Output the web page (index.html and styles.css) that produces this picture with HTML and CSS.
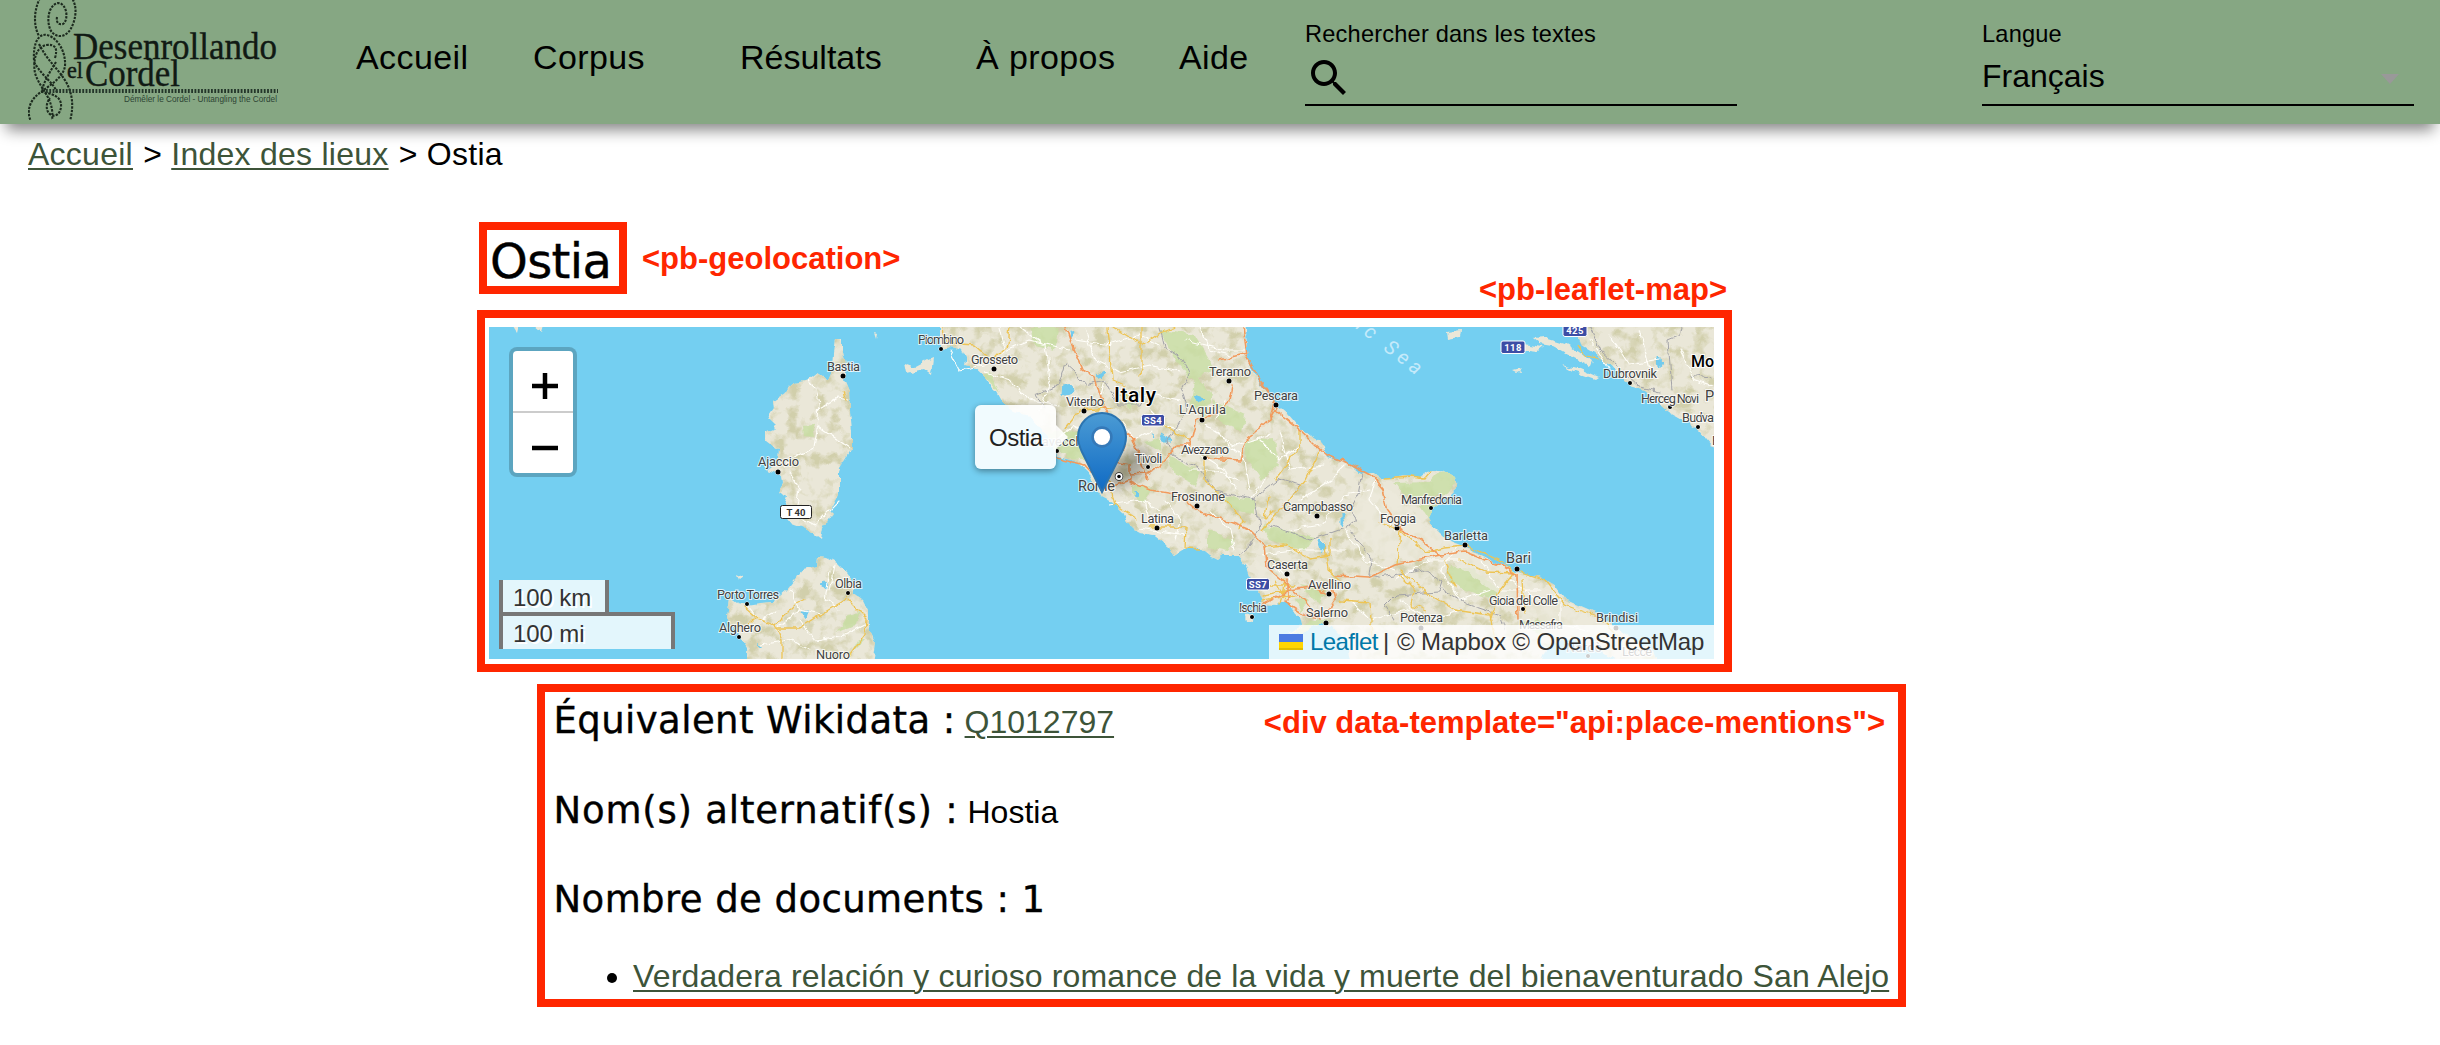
FILE: index.html
```html
<!DOCTYPE html>
<html lang="fr">
<head>
<meta charset="utf-8">
<title>Ostia – Desenrollando el Cordel</title>
<link rel="stylesheet" href="styles.css">
</head>
<body>
<header class="topbar">
  <svg class="logo" viewBox="28 0 250 120" width="250" height="120">
    <g class="cord">
      <path d="M57 17C56 23 59 25 63 24C69 20 67 3 58 3C48 5 46 22 51 31C57 39 68 38 73 24C77 13 76 5 72 -2"/>
      <path d="M40 -2C33 12 34 27 39 36"/>
      <path d="M34 60C33 44 38 33 47 35C58 38 66 52 65 66C63 80 44 88 35 97C27 106 28 116 31 121"/>
      <path d="M55 58C58 48 55 44 46 45C35 48 33 62 35 73C40 90 55 98 52 121"/>
      <path d="M39 44C48 62 58 68 66 82C74 96 73 110 70 121"/>
      <path d="M56 62C50 72 43 82 42 92C52 94 62 96 61 107C60 114 56 117 51 115C45 111 46 103 50 98"/>
      <path d="M34 62C42 76 55 84 57 93"/>
    </g>
    <path class="cord-line" d="M46 91H278"/>
    <text class="brand" x="73" y="59" font-size="37" textLength="204" lengthAdjust="spacingAndGlyphs">Desenrollando</text>
    <text class="brand" x="67" y="78" font-size="24" textLength="16" lengthAdjust="spacingAndGlyphs">el</text>
    <text class="brand" x="85" y="86" font-size="37" textLength="95" lengthAdjust="spacingAndGlyphs">Cordel</text>
    <text class="brand-sub" x="124" y="101.500" textLength="153" lengthAdjust="spacingAndGlyphs">Démêler le Cordel - Untangling the Cordel</text>
  </svg>
  <nav class="menu"><a>Accueil</a><a>Corpus</a><a>Résultats</a><a>À propos</a><a>Aide</a></nav>
  <div class="field">
    <span class="field-label">Rechercher dans les textes</span>
    <div class="field-value"><svg class="search" viewBox="3 3 17.500 17.500" width="35" height="35"><path d="M15.500 14h-.79l-.28-.27C15.410 12.590 16 11.110 16 9.500 16 5.910 13.090 3 9.500 3S3 5.910 3 9.500 5.910 16 9.500 16c1.610 0 3.090-.59 4.230-1.570l.27.28v.79l5 4.990L20.490 19l-4.990-5zm-6 0C7.010 14 5 11.990 5 9.500S7.010 5 9.500 5 14 7.010 14 9.500 11.990 14 9.500 14z"/></svg></div>
  </div>
  <div class="field lang">
    <span class="field-label">Langue</span>
    <div class="field-value"><span>Français</span><i class="caret"></i></div>
  </div>
</header>
<div class="crumbs"><a>Accueil</a> &gt; <a>Index des lieux</a> &gt; Ostia</div>
<main>
  <div class="title-row">
    <h1>Ostia</h1>
    <span class="note">&lt;pb-geolocation&gt;</span>
    <span class="note note-map">&lt;pb-leaflet-map&gt;</span>
  </div>
  <section class="map-frame">
    <div class="map">
      <svg class="tiles" viewBox="489 327 1225 332" width="1225" height="332">
        <defs>
          <filter id="rough" filterUnits="userSpaceOnUse" x="480" y="318" width="1244" height="350">
            <feTurbulence type="fractalNoise" baseFrequency=".11" numOctaves="2" seed="4"/>
            <feDisplacementMap in="SourceGraphic" scale="7" xChannelSelector="R" yChannelSelector="G"/>
          </filter>
          <filter id="relief" filterUnits="userSpaceOnUse" x="480" y="318" width="1244" height="350" color-interpolation-filters="sRGB">
            <feTurbulence type="fractalNoise" baseFrequency=".075" numOctaves="3" seed="11"/>
            <feColorMatrix values="0 0 0 0 .82  0 0 0 0 .81  0 0 0 0 .67  3.500 0 0 0 -1.600"/>
          </filter>
          <clipPath id="landclip"><use href="#mainland"/><use href="#corsica"/><use href="#sardinia"/><use href="#balkans"/></clipPath>
        </defs>
        <rect x="489" y="327" width="1225" height="332" fill="#74cff1"/>
        <g filter="url(#rough)">
          <g fill="#eae7d8">
            <path id="mainland" d="M940 310L940 350 950 347 962 350 966 358 964 365 975 368 983 375 990 385 997 392 1003 403 1015 412 1030 417 1040 428 1055 443 1057 457 1073 460 1087 470 1093 483 1102 497 1113 503 1123 513 1130 528 1140 533 1155 535 1167 545 1173 555 1183 549 1200 547 1210 555 1218 559 1223 555 1237 555 1247 567 1252 582 1258 590 1263 604 1277 605 1287 602 1295 613 1300 617 1302 625 1288 633 1300 634 1320 623 1333 627 1347 643 1352 675 1535 675 1548 645 1570 640 1600 650 1640 675 1660 675 1653 650 1630 637 1613 625 1595 612 1567 600 1557 587 1540 577 1517 572 1497 563 1480 555 1463 545 1442 537 1432 527 1429 517 1433 508 1447 497 1457 487 1455 477 1440 469 1427 472 1420 477 1403 475 1390 478 1380 478 1372 473 1360 473 1348 463 1327 457 1322 442 1310 435 1300 428 1288 414 1275 403 1262 385 1252 370 1247 350 1245 310Z"/>
            <path id="corsica" d="M835 339L843 339 843 352 846 365 844 380 849 392 850 410 852 430 852 448 843 462 839 473 839 493 830 510 833 513 823 527 821 539 813 533 803 527 792 523 783 512 788 498 777 493 783 483 782 475 767 470 777 462 778 450 765 440 765 433 777 428 767 418 774 408 773 400 785 392 795 383 808 380 817 373 828 380 832 370 833 353Z"/>
            <path id="sardinia" d="M748 675L747 647 739 635 727 617 730 598 737 603 747 605 760 603 773 602 787 590 795 580 803 570 817 567 818 557 827 558 837 563 847 573 852 580 853 593 863 600 868 610 868 627 876 642 872 675Z"/>
            <path id="balkans" d="M1565 310L1562 325 1578 334 1582 346 1592 352 1602 360 1610 365 1620 377 1633 387 1643 390 1657 402 1668 412 1677 417 1687 423 1700 432 1711 445 1725 450 1725 310Z"/>
            <path d="M1533 338L1545 337 1565 343 1580 352 1592 361 1590 366 1572 357 1552 346 1540 344ZM1523 344L1543 347 1538 351 1522 349ZM1562 364L1580 369 1598 377 1595 379 1575 372ZM1447 332L1460 330 1459 337 1448 339ZM512 325L519 325 517 333ZM533 325L543 325 541 332ZM904 363L915 367 928 360 933 358 931 374 924 369 906 373ZM1514 370L1522 368 1520 373ZM1245 616L1254 615 1253 621 1246 620ZM736 573L742 576 738 579ZM875 333L878 334 877 339Z"/>
          </g>
          <g clip-path="url(#landclip)">
            <rect x="489" y="327" width="1225" height="332" filter="url(#relief)"/>
            <g fill="#c8dfa4" opacity=".8">
              <path d="M1030 327L1060 327 1055 350 1035 345ZM1160 330L1195 335 1215 370 1190 380 1170 350ZM1195 375L1212 395 1205 420 1190 405ZM1212 400L1245 415 1242 432 1220 422ZM1245 440L1275 438 1278 465 1262 480 1245 455ZM1168 455L1200 472 1195 485 1175 475ZM1132 485L1152 488 1145 503 1132 495ZM1220 495L1255 500 1255 515 1230 508ZM1208 530L1235 540 1228 552 1208 548ZM1262 525L1315 537 1305 552 1270 540ZM1392 483L1430 482 1440 470 1458 477 1445 495 1410 497ZM1450 565L1475 570 1500 590 1495 600 1465 590 1448 580ZM1295 598L1310 600 1302 612ZM1300 585L1325 590 1320 605ZM1290 634L1310 620 1330 620 1300 640ZM1420 505L1440 505 1430 520ZM1040 435L1080 430 1095 460 1070 458ZM1120 395L1140 392 1130 410ZM1145 442L1160 438 1160 452ZM983 375L990 372 1000 393ZM803 426L812 425 814 437 804 436ZM848 615L860 612 855 625 838 632ZM1520 622L1545 620 1540 635ZM865 640L850 655 858 640Z"/>
            </g>
            <g fill="#ece9dc" opacity=".75">
              <path d="M1370 480L1390 490 1430 530 1520 575 1620 630 1600 650 1520 610 1450 560 1380 560 1350 520ZM1130 505L1190 535 1185 548 1140 530ZM1255 560L1295 590 1265 602Z"/>
            </g>
          </g>
          <g class="lake">
            <path d="M1063 385Q1074 380 1074 392 1070 398 1062 394ZM1097 375L1105 371 1100 377ZM1195 395L1204 398 1198 402ZM1160 434L1172 441 1164 441ZM1134 490L1139 495 1135 497ZM1342 513L1345 520 1342 526ZM1318 540L1326 548 1322 552ZM821 585L829 582 827 588ZM802 612L808 611 806 618ZM757 645L763 647ZM1657 357L1664 363 1658 367ZM1070 330L1074 333 1071 338ZM1150 432L1155 438Z"/>
          </g>
          <g class="road border">
            <path d="M1160 327L1165 348 1180 357 1190 375 1182 390 1188 410 1168 440 1172 455 1200 470 1215 490 1255 500 1260 530 1250 545 1238 555M1065 363L1058 385 1036 395 1045 408M1065 363L1075 372 1085 385 1105 380 1118 405 1140 405 1148 390M1252 500L1280 478 1300 485 1292 495M1362 473L1358 495 1350 510 1357 520 1345 528 1310 540 1270 525M1350 530L1372 560 1370 575 1380 577 1425 570 1443 583 1440 592 1395 595 1385 605 1395 620M1443 590L1470 605 1500 615 1505 630M1590 327L1600 350 1640 387 1660 392M1672 390L1668 340 1680 335 1682 327M1690 375L1710 378"/>
          </g>
          <g class="road white">
            <path d="M808 380L816 388 819 405 817 430 814 448 798 455 783 465M817 410L838 398 848 400M817 425L850 448M790 472L800 490 795 515 815 525 840 500M748 605L760 620 775 612M790 590L800 610 820 615M830 570L825 600 840 610M760 645L790 640 810 650M800 620L815 640 845 635 865 625M835 565L830 590M775 630L800 610"/>
            <path d="M950 350L960 370 985 365 1005 350 1030 340 1070 350M985 372L1010 380 1030 400 1060 405M1000 327L1005 350M1020 327L1045 345 1050 380 1040 410M1075 340L1110 345 1140 335 1160 345M1085 330L1095 360 1120 372 1150 365 1180 372M1100 400L1105 380M1130 400L1155 395 1180 400M1185 340L1225 350 1245 350M1200 327L1210 350 1230 355M1150 410L1165 425 1180 430M1120 420L1135 440 1150 430M1205 425L1235 445 1270 435M1215 430L1245 460 1250 490M1225 400L1215 420M1260 440L1280 460 1300 445M1280 430L1290 470 1325 465M1050 445L1075 425 1085 430M1110 505L1140 500 1160 510M1145 500L1150 525M1165 500L1180 520 1175 540M1190 470L1215 470 1240 480M1210 510L1230 530 1235 550M1250 500L1265 480M1300 500L1330 480 1345 465M1290 530L1320 525 1345 495 1370 490M1375 480L1370 500 1395 530M1262 555L1300 550 1345 550M1345 530L1365 560 1395 570M1395 580L1430 560 1465 560M1460 545L1440 570 1460 600 1490 590M1480 560L1500 590 1540 590M1510 580L1540 600 1560 595M1560 600L1560 625 1590 630M1400 600L1430 620 1460 610M1350 600L1370 620 1410 610M1275 565L1290 580M1140 528L1185 535M1590 340L1610 370M1610 335L1630 365 1660 360M1640 330L1650 370M1680 350L1695 380 1712 385M1185 445L1225 470 1235 490"/>
          </g>
          <g class="road yellow">
            <path d="M943 327L945 343 975 345 993 360 1008 345 1010 327M1108 327L1112 380 1125 385 1127 400M1113 327L1142 345 1160 333 1175 327M1142 327L1142 370 1138 375M1160 422L1180 435 1190 440M1066 428L1080 410 1112 408M1107 472L1115 505 1138 520M1150 527L1186 527 1185 548 1200 549M1205 460L1205 480 1225 500 1243 520 1240 530M1268 495L1265 520 1275 510M1275 480L1300 445 1300 430M1320 450L1305 480 1280 510 1262 530M1265 547L1285 545 1310 558 1330 555 1330 540M1325 545L1328 570 1340 580M1385 478L1410 476 1425 478 1430 472M1378 522L1400 530 1397 565M1400 530L1425 552 1445 547 1465 545 1500 560 1517 575M1445 560L1455 588 1450 580M1460 560L1485 572 1515 573M1400 575L1415 590 1412 605 1425 610M1340 600L1370 602 1372 640M1400 570L1430 595 1455 610 1490 615 1495 640M1515 572L1500 590 1490 620M1520 572L1545 580 1565 605 1600 618 1622 640M1523 580L1525 612M1260 585L1295 585M1262 595L1290 590M1262 600L1295 595M1275 580L1285 600M1285 580L1280 605M745 607L758 618 775 625 782 640 782 659M775 628L800 628 825 612 845 600 848 595M775 625L795 605 805 600M848 600L866 618 865 635 850 655M1578 345L1585 355 1600 360M843 391L846 401M755 618L748 625"/>
          </g>
          <g class="road orange">
            <path d="M1066 327L1072 345 1082 370 1095 378 1103 405 1115 425 1135 440M1055 458L1085 465 1098 480 1112 487 1130 480 1130 465 1115 462 1108 470M1130 474L1148 473 1160 465 1178 445 1190 445 1196 420 1215 414 1230 400 1233 385M1205 458L1240 460 1245 440 1270 420 1278 405M1118 460L1125 445 1120 420M1243 327L1247 355 1260 380 1276 403M1220 360L1247 353M1275 400L1270 418M1275 410L1300 430 1327 455 1348 463 1370 475 1383 490 1388 510 1402 530 1420 540 1440 555 1465 552 1500 565 1517 575 1518 620M1133 440L1140 460 1148 480M1130 482L1150 490 1180 495 1200 512 1220 518 1250 530 1265 545 1267 567 1287 585 1305 600 1320 620M1263 604L1290 590 1310 587 1325 592M1287 580L1287 600M1335 575L1370 577 1395 565 1440 555M1285 602L1305 615 1320 618M1330 580L1335 600 1325 615"/>
          </g>
        </g>
        <ellipse class="pin-shadow" cx="1128" cy="468" rx="27" ry="14" transform="rotate(-40 1128 468)"/>
        <g class="dots">
          <circle cx="843" cy="376" r="2.500"/><circle cx="778" cy="472" r="2.500"/><circle cx="747" cy="604" r="2"/><circle cx="848" cy="593" r="2"/><circle cx="739" cy="637" r="2"/><circle cx="941" cy="349" r="2"/><circle cx="994" cy="369" r="2.500"/><circle cx="1084" cy="411" r="2.500"/><circle cx="1057" cy="451" r="2"/><circle cx="1229" cy="381" r="2.500"/><circle cx="1276" cy="405" r="2.500"/><circle cx="1202" cy="420" r="2.500"/><circle cx="1205" cy="458" r="2"/><circle cx="1148" cy="467" r="2"/><circle cx="1197" cy="506" r="2.500"/><circle cx="1157" cy="528" r="2.500"/><circle cx="1287" cy="574" r="2.500"/><circle cx="1252" cy="617" r="2"/><circle cx="1317" cy="516" r="2.500"/><circle cx="1329" cy="594" r="2.500"/><circle cx="1326" cy="623" r="2.500"/><circle cx="1397" cy="528" r="2.500"/><circle cx="1431" cy="508" r="2"/><circle cx="1465" cy="545" r="2.500"/><circle cx="1517" cy="569" r="2.500"/><circle cx="1523" cy="609" r="2"/><circle cx="1421" cy="628" r="2.500"/><circle cx="1616" cy="628" r="2.500"/><circle cx="1630" cy="383" r="2"/><circle cx="1670" cy="407" r="2"/><circle cx="1698" cy="427" r="2"/><circle cx="1588" cy="656" r="2"/>
          <circle cx="1119" cy="476.500" r="3.500" class="ring"/><circle cx="1119" cy="476.500" r="1.800"/>
        </g>
        <g class="town">
          <text x="827" y="371" textLength="33">Bastia</text><text x="758" y="465.500" textLength="41">Ajaccio</text><text x="717" y="598.500" textLength="62">Porto Torres</text><text x="835" y="588" textLength="27">Olbia</text><text x="719" y="632" textLength="42">Alghero</text><text x="816" y="659" textLength="34">Nuoro</text>
          <text x="918" y="344" textLength="46">Piombino</text><text x="971" y="363.500" textLength="47">Grosseto</text><text x="1066" y="406" textLength="38">Viterbo</text><text x="1016" y="446" textLength="77">Civitavecchia</text><text x="1209" y="376" textLength="42">Teramo</text><text x="1254" y="400" textLength="44">Pescara</text><text x="1179" y="414" textLength="47">L'Aquila</text><text x="1181" y="454" textLength="48">Avezzano</text><text x="1135" y="462.500" textLength="27">Tivoli</text><text x="1078" y="491" textLength="37" class="city">Rome</text><text x="1171" y="501" textLength="54">Frosinone</text><text x="1141" y="522.500" textLength="33">Latina</text><text x="1267" y="569" textLength="41">Caserta</text><text x="1239" y="612" textLength="28">Ischia</text><text x="1283" y="511" textLength="70">Campobasso</text><text x="1308" y="589" textLength="43">Avellino</text><text x="1306" y="617" textLength="42">Salerno</text><text x="1380" y="523" textLength="36">Foggia</text><text x="1401" y="504" textLength="61">Manfredonia</text><text x="1444" y="540" textLength="44">Barletta</text><text x="1506" y="563" textLength="25" class="city">Bari</text><text x="1489" y="604.500" textLength="69">Gioia del Colle</text><text x="1519" y="629" textLength="44">Massafra</text><text x="1400" y="622" textLength="43">Potenza</text><text x="1596" y="622" textLength="42">Brindisi</text><text x="1622" y="656" textLength="30">Lecce</text><text x="1566" y="652" textLength="36">Nardò</text><text x="1603" y="378" textLength="54">Dubrovnik</text><text x="1641" y="402.500" textLength="58">Herceg Novi</text><text x="1705" y="401" class="city">P</text><text x="1682" y="422" textLength="32">Budva</text><text x="1712" y="445">B</text>
        </g>
        <text class="country" x="1114" y="402" font-size="21" textLength="42">Italy</text>
        <text class="country" x="1691" y="367" font-size="16">Mo</text>
        <text class="sea" transform="translate(1355 328) rotate(38)">ic Sea</text>
        <g class="shield">
          <rect x="1141.500" y="414.500" width="23" height="11.500" rx="2"/><text x="1153" y="424" >SS4</text>
          <rect x="1246.500" y="578.500" width="23" height="11.500" rx="2"/><text x="1258" y="588">SS7</text>
          <rect x="1501" y="341" width="24" height="12.500" rx="2"/><text x="1513" y="350.500">118</text>
          <rect x="1563" y="324" width="24" height="12.500" rx="2"/><text x="1575" y="334">425</text>
        </g>
        <rect x="780.500" y="505.500" width="31" height="13" rx="2" fill="#fff" stroke="#222"/>
        <text class="route" x="796" y="515.500">T 40</text>
      </svg>
      <div class="tooltip">Ostia</div>
      <svg class="marker" viewBox="0 0 25 41" width="50" height="82">
        <defs><linearGradient id="pin" x2="0" y2="1"><stop offset="0" stop-color="#4b9bd4"/><stop offset="1" stop-color="#0f6ac4"/></linearGradient></defs>
        <path d="M12.500 .5C5.800 .5 .5 5.800 .5 12.500 .5 15 1.300 17.500 2.500 20L12.500 40 22.500 20C23.700 17.500 24.500 15 24.500 12.500 24.500 5.800 19.200 .5 12.500 .5Z" fill="url(#pin)" stroke="#2c74b0"/>
        <circle cx="12.500" cy="12.500" r="4.700" fill="#fff" stroke="#3579b8" stroke-width="1.300"/>
      </svg>
      <div class="zoom">
        <span><svg width="26" height="26"><path d="M0 13H26M13 0V26"/></svg></span>
        <span><svg width="26" height="26"><path d="M0 13H26"/></svg></span>
      </div>
      <div class="scale"><div class="km">100 km</div><div class="mi">100 mi</div></div>
      <div class="credits"><i class="flag"></i><a>Leaflet</a><span class="sep">|</span><span>© Mapbox © OpenStreetMap</span></div>
    </div>
  </section>
  <section class="mentions">
    <div class="row"><h2>Équivalent Wikidata&nbsp;:</h2><a>Q1012797</a><span class="note">&lt;div data-template="api:place-mentions"&gt;</span></div>
    <div class="row names"><h2>Nom(s) alternatif(s)&nbsp;:</h2><span class="alt">Hostia</span></div>
    <div class="row"><h2>Nombre de documents : 1</h2></div>
    <ul><li><a>Verdadera relación y curioso romance de la vida y muerte del bienaventurado San Alejo</a></li></ul>
  </section>
</main>
</body>
</html>
```
FILE: styles.css
```css
* { box-sizing: border-box; }
body { margin: 0; background: #fff; color: #000; font: 32px "Liberation Sans", Arial, sans-serif; }
.topbar {
  display: flex; height: 124px; padding-left: 28px; background: #86a783;
  box-shadow: 0 12px 14px -6px rgba(0, 0, 0, .48);
}
.logo { width: 250px; flex: none; margin-right: 78px; }
.cord { fill: none; stroke: #1c2b1e; stroke-width: 2.1; stroke-dasharray: 2.4 1.2; }
.cord-line { stroke: #24362a; stroke-width: 4; stroke-dasharray: 1.8 1.5; }
.brand { font-family: "Liberation Serif", serif; fill: #111a14; stroke: #111a14; stroke-width: .4; }
.brand-sub { font-size: 8.5px; fill: #2d4433; }
.menu { display: grid; grid-template-columns: 177px 207px 236px 203px 126px; font-size: 34px; line-height: 114px; letter-spacing: .4px; }
.menu a:nth-child(3) { letter-spacing: 0; }
.field { width: 432px; height: 106px; padding-top: 20px; border-bottom: 2px solid #000; }
.field.lang { margin-left: 245px; }
.field-label { display: block; font-size: 23.6px; line-height: 28px; letter-spacing: .2px; }
.field-value { display: flex; align-items: center; height: 56px; }
.search { margin: 3px 0 0 6px; }
.caret { margin: 6px 15px 0 auto; border: 9px solid transparent; border-top: 10px solid #999; border-bottom: 0; }
a { color: #3d5439; text-decoration: underline; text-decoration-thickness: 2px; text-underline-offset: 3px; }
.menu a { color: #000; text-decoration: none; }
.crumbs { padding-left: 28px; line-height: 60px; letter-spacing: .26px; }
.crumbs a { margin-right: 1px; }

.title-row { display: flex; align-items: center; width: 1248px; height: 72px; margin: 38px 0 0 479px; }
h1, h2 { margin: 0; font-family: "DejaVu Sans", sans-serif; font-weight: 400; -webkit-text-stroke: .4px #000; }
h1 { width: 148px; height: 72px; padding: 4px 0 0 3px; border: 8px solid #ff2600; font-size: 48px; line-height: 54px; letter-spacing: -.6px; }
.note { color: #ff2600; font-size: 31px; font-weight: 700; line-height: 30px; white-space: nowrap; }
.title-row .note { margin: 2px 0 0 15px; }
.title-row .note-map { align-self: flex-end; margin: 0 0 -11px auto; }

.map-frame { width: 1255px; height: 362px; margin: 16px 0 0 477px; padding: 9px 0 0 4px; border: 8px solid #ff2600; }
.map { position: relative; width: 1225px; height: 332px; overflow: hidden; }
.tiles { display: block; }
.lake { fill: #6fcaee; stroke: #6fcaee; }
.road { fill: none; stroke-linejoin: round; stroke-linecap: round; }
.border { stroke: #a3a3a8; stroke-width: 1; }
.white { stroke: #fffef9; stroke-width: 1.1; }
.yellow { stroke: #edc454; stroke-width: 1.3; }
.orange { stroke: #f29a5c; stroke-width: 1.6; }
.pin-shadow { fill: #000; opacity: .28; filter: blur(6px); }
.dots circle { stroke: #fff; stroke-width: 1; paint-order: stroke; }
.dots .ring { fill: #fff; stroke: #222; stroke-width: 1.5; }
.town text { font: 12.8px Roboto, sans-serif; fill: #414141; stroke: rgba(255, 255, 255, .75); stroke-width: 2; paint-order: stroke; }
.town .city { font-size: 14.5px; }
.country { font-family: Roboto, sans-serif; font-weight: 500; fill: #000; stroke: #fff; stroke-width: 2; paint-order: stroke; }
.sea { font: italic 20px Roboto, sans-serif; letter-spacing: 5px; fill: #c5eafa; }
.shield rect { fill: #3c4da5; stroke: #fff; }
.shield text, .route { font: 700 9.5px Roboto, sans-serif; fill: #fff; text-anchor: middle; }
.shield text { letter-spacing: .4px; }
.route { fill: #333; }

.tooltip {
  position: absolute; left: 486px; top: 78px; width: 81px; height: 64px; padding-left: 14px;
  border-radius: 6px; background: rgba(255, 255, 255, .9); box-shadow: 0 2px 6px rgba(0, 0, 0, .4);
  color: #222; font-size: 24px; line-height: 65px; letter-spacing: -.5px;
}
.tooltip::after { content: ""; position: absolute; left: 81px; top: 20px; border: 12px solid transparent; border-left-color: rgba(255, 255, 255, .9); border-right: 0; }
.marker { position: absolute; left: 588px; top: 85px; }
.zoom { position: absolute; left: 20px; top: 20px; width: 68px; height: 130px; border: 4px solid rgba(0, 0, 0, .2); border-radius: 8px; background: #fff; background-clip: padding-box; }
.zoom span { display: flex; align-items: center; justify-content: center; height: 61px; padding-left: 3px; }
.zoom span:first-child { height: 62px; padding-top: 9px; border-bottom: 2px solid #ccc; }
.zoom span:last-child { height: 60px; padding-top: 10px; }
.zoom path { stroke: #000; stroke-width: 4.5; }
.scale { position: absolute; left: 10px; top: 253px; color: #333; font-size: 24px; letter-spacing: -.1px; text-shadow: 2px 2px #fff; }
.scale div { padding-left: 10px; border: 4px solid #777; border-top: 0; background: rgba(255, 255, 255, .8); }
.km { width: 110px; height: 36px; line-height: 36px; }
.scale .mi { width: 176px; height: 37px; margin-top: -4px; border-top: 4px solid #777; border-bottom: 0; line-height: 35px; }
.credits { position: absolute; right: 0; bottom: 0; display: flex; align-items: center; width: 445px; height: 34px; padding-left: 10px; background: rgba(255, 255, 255, .8); color: #333; font-size: 24px; line-height: 36px; letter-spacing: -.12px; white-space: nowrap; }
.credits a { width: 73px; margin-left: 7px; color: #0078a8; letter-spacing: -.6px; text-decoration: none; }
.credits .sep { width: 14px; }
.flag { width: 24px; height: 16px; border-bottom: 2px solid #e0bc00; background: linear-gradient(#4c7be1 50%, #ffd500 50%) 0 0 / 24px 16px; }

.mentions { width: 1369px; height: 323px; margin: 12px 0 0 537px; padding: 0 13px 0 8.5px; border: 8px solid #ff2600; }
.row { display: flex; align-items: baseline; height: 56px; margin-bottom: 33.5px; line-height: 57px; white-space: nowrap; }
h2 { margin-right: 9px; font-size: 37px; letter-spacing: .42px; }
.names h2 { letter-spacing: .8px; }
.row a, .row .alt { line-height: 32px; }
.row .note { margin-left: auto; }
ul { margin: -5px 0 0; padding-left: 79.5px; line-height: 40px; white-space: nowrap; letter-spacing: .15px; }
```
